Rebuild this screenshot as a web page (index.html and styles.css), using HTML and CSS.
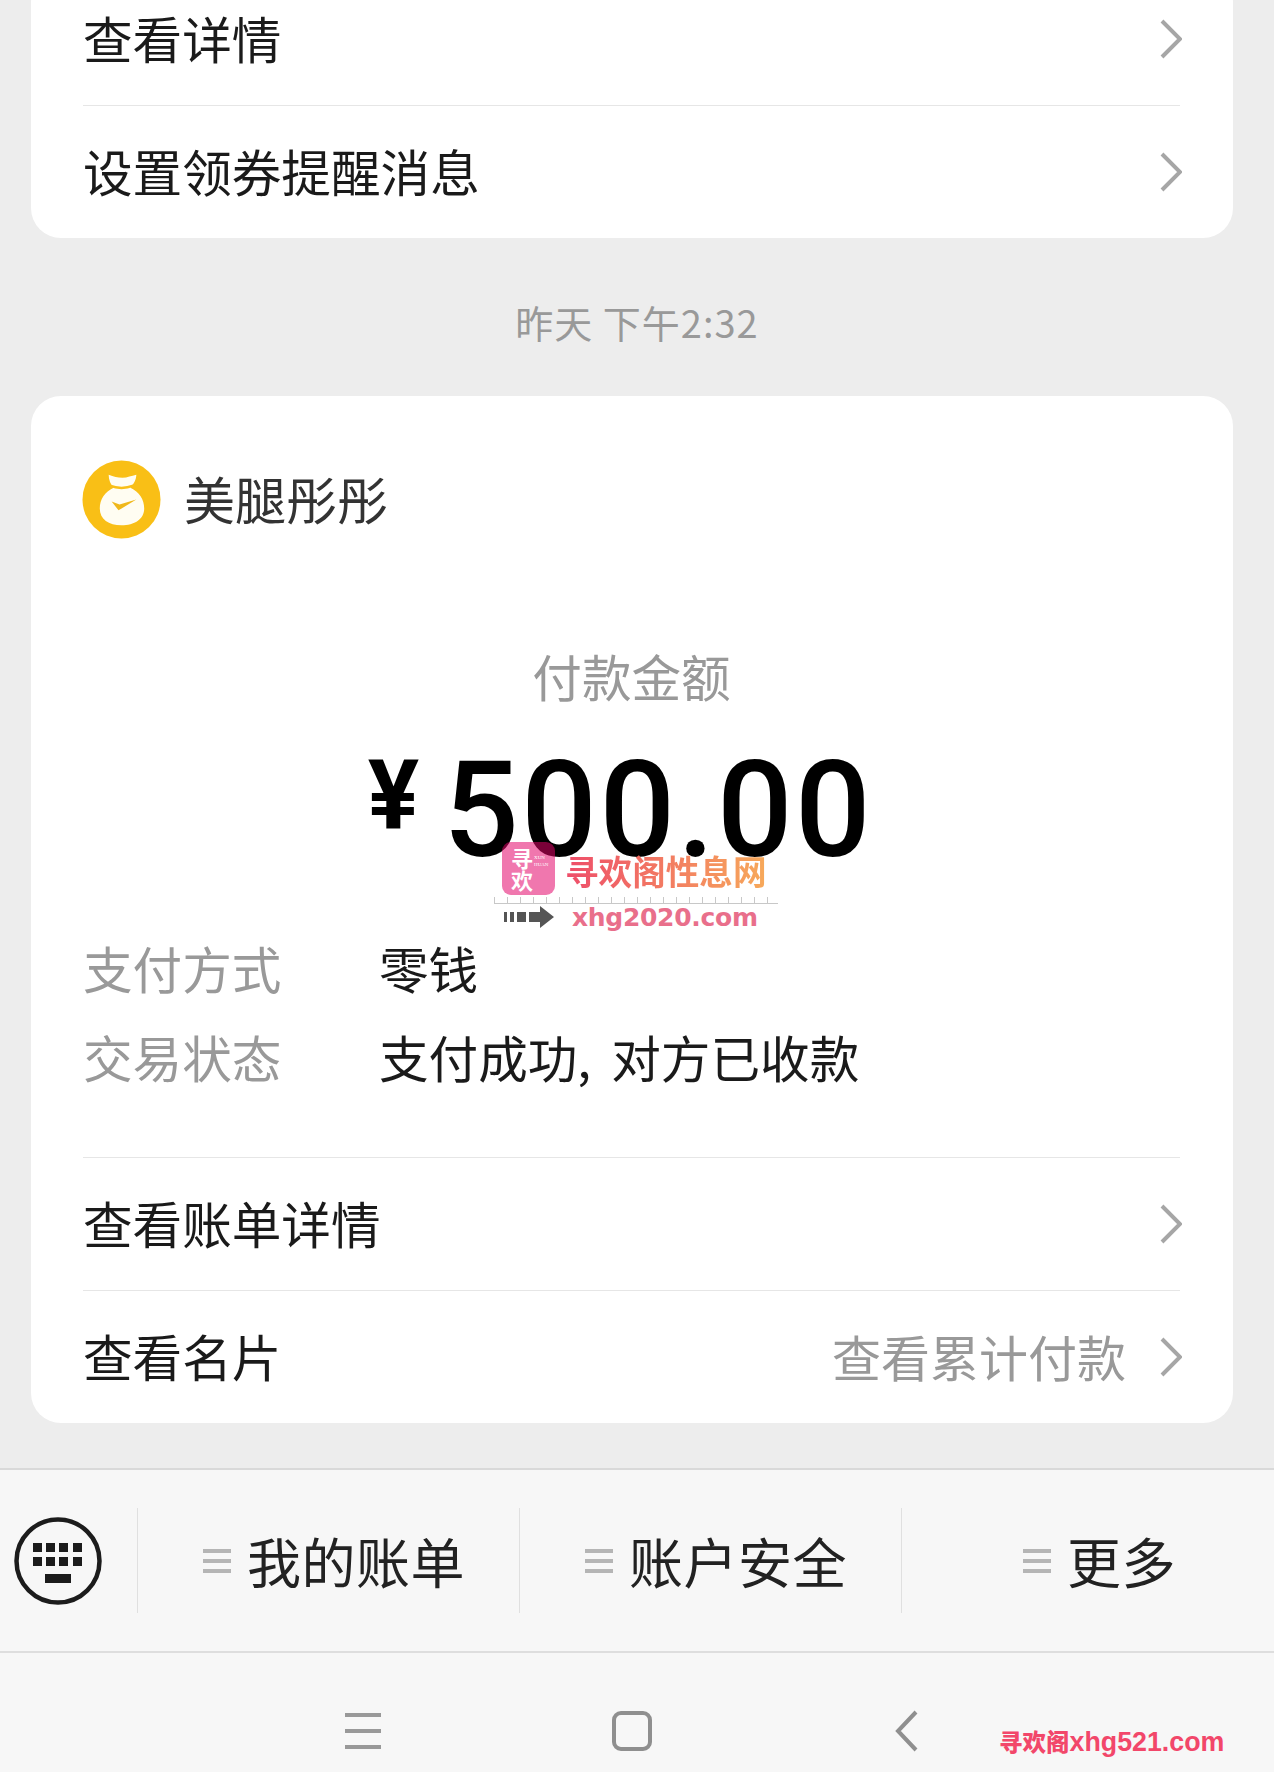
FILE: index.html
```html
<!DOCTYPE html>
<html lang="zh">
<head>
    <meta charset="utf-8">
    <title>支付凭证</title>
    <link rel="stylesheet" href="styles.css">
</head>
<body>
    <div class="feed">
        <div class="card">
            <div class="row">
                <span>查看详情</span>
                <svg class="chevron" viewBox="0 0 22 40"><path d="M2 2 L20 20 L2 38"/></svg>
            </div>
            <div class="row row-last">
                <span>设置领券提醒消息</span>
                <svg class="chevron" viewBox="0 0 22 40"><path d="M2 2 L20 20 L2 38"/></svg>
            </div>
        </div>

        <div class="time">昨天 下午2:32</div>

        <div class="card">
            <div class="head">
                <svg class="avatar" viewBox="0 0 80 80">
                    <circle cx="40" cy="40" r="39.5" fill="#f9bf16"/>
                    <path d="M27 15 C32 17 36 18 41 18 C46 18 50 16 55 15 C55 20 52 25 49 28 C58 32 63 40 63 49 C63 60 53 66 40 66 C27 66 18 60 18 49 C18 40 23 32 32 28 C29 25 27 20 27 15 Z" fill="#fffdf2"/>
                    <path d="M28 26 C36 29 44 29 52 26" fill="none" stroke="#f9bf16" stroke-width="2.5"/>
                    <path d="M30 42 L37 51 L55 40 L38 45 Z" fill="#f0b81a"/>
                </svg>
                <span class="name">美腿彤彤</span>
            </div>

            <div class="amount-label">付款金额</div>
            <div class="amount">
                <span class="yen">¥</span>
                <span class="money">500.00</span>
            </div>

            <div class="detail">
                <span class="detail-key">支付方式</span>
                <span>零钱</span>
            </div>
            <div class="detail">
                <span class="detail-key">交易状态</span>
                <span class="detail-status">支付成功, 对方已收款</span>
            </div>

            <div class="links">
                <div class="row">
                    <span>查看账单详情</span>
                    <svg class="chevron" viewBox="0 0 22 40"><path d="M2 2 L20 20 L2 38"/></svg>
                </div>
                <div class="row row-last">
                    <span>查看名片</span>
                    <span class="row-note">查看累计付款</span>
                    <svg class="chevron" viewBox="0 0 22 40"><path d="M2 2 L20 20 L2 38"/></svg>
                </div>
            </div>
        </div>
    </div>

    <div class="menubar">
        <div class="keyboard">
            <svg class="keyboard-icon" viewBox="0 0 88 88">
                <circle cx="44" cy="44" r="41.5" fill="none" stroke="#1c1c1c" stroke-width="4.5"/>
                <g fill="#1c1c1c">
                    <rect x="19" y="26" width="9" height="9"/><rect x="32" y="26" width="9" height="9"/><rect x="45" y="26" width="9" height="9"/><rect x="59" y="26" width="9" height="9"/>
                    <rect x="19" y="40" width="9" height="9"/><rect x="32" y="40" width="9" height="9"/><rect x="45" y="40" width="9" height="9"/><rect x="59" y="40" width="9" height="9"/>
                    <rect x="31" y="57" width="26" height="9"/>
                </g>
            </svg>
        </div>
        <div class="menu-item">
            <svg class="bars" viewBox="0 0 28 26"><path d="M0 3 H28 M0 13 H28 M0 23 H28"/></svg>
            <span>我的账单</span>
        </div>
        <div class="menu-item">
            <svg class="bars" viewBox="0 0 28 26"><path d="M0 3 H28 M0 13 H28 M0 23 H28"/></svg>
            <span>账户安全</span>
        </div>
        <div class="menu-item menu-more">
            <svg class="bars" viewBox="0 0 28 26"><path d="M0 3 H28 M0 13 H28 M0 23 H28"/></svg>
            <span>更多</span>
        </div>
    </div>

    <div class="navbar">
        <svg class="nav-menu" viewBox="0 0 36 36"><path d="M0 2 H36 M0 18 H36 M0 34 H36"/></svg>
        <svg class="nav-home" viewBox="0 0 40 40"><rect x="2" y="2" width="36" height="36" rx="7"/></svg>
        <svg class="nav-back" viewBox="0 0 24 42"><path d="M21 2 L3 21 L21 40"/></svg>
    </div>

    <!-- watermarks sit over the screenshot -->
    <div class="stamp">
        <div class="stamp-top">
            <div class="stamp-logo">
                <span class="stamp-logo-big">寻<br>欢</span>
                <span class="stamp-logo-small">XUN<br>HUAN</span>
            </div>
            <div class="stamp-title">寻欢阁性息网</div>
        </div>
        <div class="stamp-rule"></div>
        <div class="stamp-bottom">
            <svg class="stamp-arrow" viewBox="0 0 50 22">
                <path d="M0 6 H3 V16 H0 Z M6 6 H10 V16 H6 Z M13 6 H22 V16 H13 Z M25 6 H36 V0 L50 11 L36 22 V16 H25 Z" fill="#555"/>
            </svg>
            <span class="stamp-url">xhg2020.com</span>
        </div>
    </div>
    <div class="corner-mark"><span class="corner-cn">寻欢阁</span>xhg521.com</div>
</body>
</html>
```

FILE: styles.css
```css
*{
    padding:0;
    margin:0;
    box-sizing:border-box;
}
body{
    position:relative;
    width:1274px;
    height:1772px;
    overflow:hidden;
    background-color:#ededed;
    color:#1a1a1a;
    font-family:"Noto Sans CJK SC","Noto Sans",sans-serif;
    font-size:49.6px;
}

/* chat feed */
.feed{
    margin-top:-27px;
    padding:0 41px 45px 31px;
}
.card{
    background-color:white;
    border-radius:30px;
    padding:0 53px 0 52px;
}
.row{
    display:flex;
    align-items:center;
    height:133px;
    border-bottom:1px solid #e6e6e6;
    padding-bottom:4px;
}
.row-last{
    height:132px;
    border-bottom:none;
}
.row > span:first-child{
    flex:1;
}
.row-note{
    color:#999999;
    font-size:49px;
    margin-right:34px;
}
.chevron{
    width:22px;
    height:40px;
    margin:4px -2px 0 0;
    fill:none;
    stroke:#a6a6a6;
    stroke-width:4;
}
.time{
    height:158px;
    display:flex;
    align-items:center;
    justify-content:center;
    color:#999999;
    font-size:38px;
    padding:9px 0 0 10px;
    letter-spacing:1px;
}

/* payment card */
.head{
    display:flex;
    align-items:center;
    gap:23px;
    padding-top:64px;
}
.avatar{
    width:79px;
    height:79px;
    margin-left:-1px;
}
.name{
    font-size:51px;
    color:#333333;
    margin-top:-4px;
}
.amount-label{
    margin-top:106px;
    text-align:center;
    color:#999999;
    line-height:60px;
}
.amount{
    display:flex;
    justify-content:center;
    align-items:flex-start;
    gap:24px;
    height:150px;
    margin-top:31px;
    padding-right:22px;
    color:black;
    font-family:"Roboto",sans-serif;
}
.yen{
    font-size:96px;
    font-weight:700;
    line-height:118px;
}
.money{
    font-size:133px;
    font-weight:500;
    line-height:150px;
    letter-spacing:2.5px;
}
.detail{
    display:flex;
    align-items:center;
    height:89px;
}
.amount + .detail{
    margin-top:36px;
}
.detail-key{
    width:296px;
    color:#999999;
}
.detail-status{
    word-spacing:9px;
}
.links{
    margin-top:57px;
    border-top:1px solid #e6e6e6;
}

/* menu at the bottom of the chat */
.menubar{
    display:flex;
    align-items:center;
    height:185px;
    background-color:#f7f7f7;
    border-top:2px solid #d9d9d9;
    border-bottom:2px solid #dedede;
    color:#222222;
    font-size:54px;
}
.menubar span{
    letter-spacing:0.5px;
}
.keyboard{
    width:137px;
    padding-left:14px;
    display:flex;
}
.keyboard-icon{
    width:88px;
    height:88px;
}
.menu-item{
    display:flex;
    align-items:center;
    gap:16px;
    width:382px;
    height:105px;
    padding-left:65px;
    border-left:1px solid #e0e0e0;
}
.menu-more{
    flex:1;
    padding-left:121px;
}
.bars{
    width:28px;
    height:26px;
    fill:none;
    stroke:#b5b5b5;
    stroke-width:4;
}

/* phone navigation */
.navbar{
    display:flex;
    align-items:center;
    height:119px;
    padding:36px 0 0 345px;
    background-color:#f7f7f7;
    fill:none;
}
.nav-menu{
    width:36px;
    height:36px;
    stroke:#999999;
    stroke-width:4;
}
.nav-home{
    width:40px;
    height:40px;
    margin-left:231px;
    stroke:#8f8f8f;
    stroke-width:4;
}
.nav-back{
    width:24px;
    height:42px;
    margin-left:243px;
    stroke:#8f8f8f;
    stroke-width:4;
}

/* watermarks */
.stamp{
    position:absolute;
    left:494px;
    top:842px;
    width:284px;
}
.stamp-top{
    display:flex;
    align-items:flex-end;
    gap:10px;
    padding-left:8px;
}
.stamp-logo{
    display:flex;
    width:53px;
    height:53px;
    border-radius:9px;
    background-color:rgba(227,2,104,0.537);
    color:white;
    padding:4px 0 0 9px;
}
.stamp-logo-big{
    font-size:22px;
    line-height:22px;
    font-weight:700;
}
.stamp-logo-small{
    font-size:5px;
    line-height:7px;
    margin:8px 0 0 1px;
    font-family:"Liberation Serif",serif;
}
.stamp-title{
    font-size:33.6px;
    line-height:44px;
    font-weight:700;
    background-image:linear-gradient(to right,#ee4d6a,#f7a95a);
    -webkit-background-clip:text;
    background-clip:text;
    color:transparent;
    white-space:nowrap;
    padding-bottom:2px;
}
.stamp-rule{
    height:7px;
    margin-top:2px;
    border-bottom:1px solid #c8c8c8;
    background-image:repeating-linear-gradient(to right,#c8c8c8 0,#c8c8c8 1px,transparent 1px,transparent 13px);
}
.stamp-bottom{
    display:flex;
    align-items:center;
    gap:18px;
    padding-left:10px;
}
.stamp-arrow{
    width:50px;
    height:22px;
    margin-top:-3px;
}
.stamp-url{
    font-family:"DejaVu Sans",sans-serif;
    font-size:25px;
    line-height:28px;
    font-weight:700;
    color:#e96f8b;
    white-space:nowrap;
    letter-spacing:-0.3px;
}
.corner-mark{
    position:absolute;
    left:999px;
    top:1724px;
    font-family:"Liberation Sans",sans-serif;
    font-size:26.8px;
    line-height:34px;
    font-weight:700;
    color:#f2476a;
    white-space:nowrap;
}
.corner-cn{
    font-family:"Noto Sans CJK SC",sans-serif;
    font-size:23.5px;
    font-weight:900;
}
```
